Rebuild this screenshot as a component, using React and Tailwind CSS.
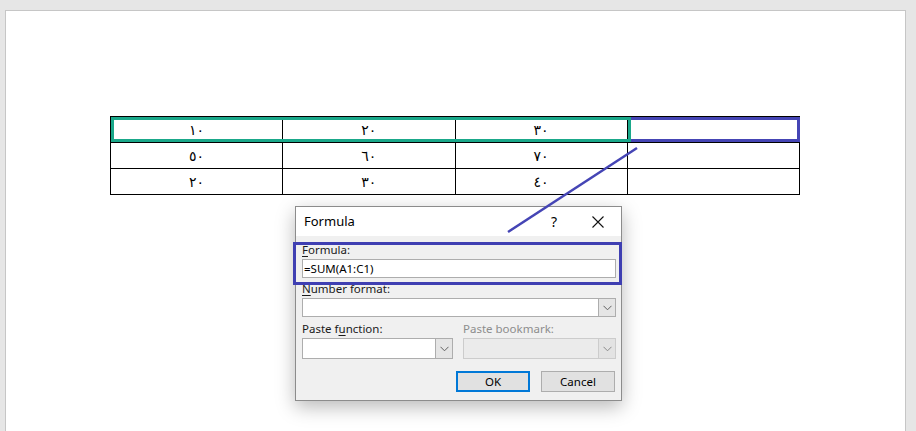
const ui = { fontFamily: '"Noto Sans", "Open Sans", sans-serif' };
const arabic = { fontFamily: '"DejaVu Sans", sans-serif' };

const rows = [
  ['١٠', '٢٠', '٣٠', ''],
  ['٥٠', '٦٠', '٧٠', ''],
  ['٢٠', '٣٠', '٤٠', ''],
];

function Chevron({ muted }) {
  return (
    <svg width="9" height="6" viewBox="0 0 9 6" fill="none">
      <path d="M0.5 0.8 L4.5 4.8 L8.5 0.8" stroke={muted ? '#8a8a8a' : '#606060'} strokeWidth="1" />
    </svg>
  );
}

function Select({ width, disabled }) {
  return (
    <div
      className={`flex h-full border ${disabled ? 'border-[#cccccc] bg-[#ebebeb]' : 'border-[#adadad] bg-white'}`}
      style={width ? { width } : undefined}
    >
      <div className="flex-1" />
      <div
        className={`w-[17px] flex items-center justify-center border-l ${disabled ? 'border-[#cccccc] bg-[#e3e3e3]' : 'border-[#adadad] bg-[#e5e5e5]'}`}
      >
        <Chevron muted={disabled} />
      </div>
    </div>
  );
}

function FormulaDialog() {
  return (
    <div
      className="w-[327px] h-[195px] border border-[#8c8c8c] bg-[#f0f0f0] shadow-[0_6px_18px_rgba(0,0,0,0.28)] text-[11.5px] text-[#1a1a1a]"
      style={ui}
    >
      {/* Title bar */}
      <div className="h-[29px] bg-white flex items-center pl-[8px] pr-[17px]">
        <span className="text-[13px] text-black">Formula</span>
        <span className="ml-auto mr-[35px] text-[14px] text-black">?</span>
        <svg width="12" height="12" viewBox="0 0 12 12">
          <path d="M0.5 0.5 L11.5 11.5 M11.5 0.5 L0.5 11.5" stroke="#111" strokeWidth="1.1" />
        </svg>
      </div>

      {/* Body */}
      <div className="pl-[6px] pr-[5px] pt-[5px]">
        <div className="h-[18px] leading-[18px]">
          <span className="underline underline-offset-2">F</span>ormula:
        </div>
        <div className="h-[19px] bg-white border border-[#adadad] flex items-center pl-[1px] text-black">
          =SUM(A1:C1)
        </div>

        <div className="mt-[2px] h-[18px] leading-[18px]">
          <span className="underline underline-offset-2">N</span>umber format:
        </div>
        <div className="h-[19px]">
          <Select />
        </div>

        <div className="mt-[3px] flex h-[18px] leading-[18px]">
          <div className="w-[161px]">
            Paste f<span className="underline underline-offset-2">u</span>nction:
          </div>
          <div className="text-[#8d8d8d]">Paste bookmark:</div>
        </div>
        <div className="flex h-[21px]">
          <Select width={151} />
          <div className="ml-[10px] flex-1">
            <Select disabled />
          </div>
        </div>

        <div className="mt-[12px] flex justify-end gap-[11px] pr-[1px]">
          <button className="w-[74px] h-[21px] bg-[#e1e1e1] border-2 border-[#0078d7] text-black leading-none">
            OK
          </button>
          <button className="w-[74px] h-[21px] bg-[#e1e1e1] border border-[#adadad] text-black leading-none">
            Cancel
          </button>
        </div>
      </div>
    </div>
  );
}

export default function App() {
  return (
    <div className="h-[431px] w-[916px] overflow-hidden bg-[#e6e6e6] pt-[10px] pl-[5px] pr-[10px]">
      <div className="relative h-[440px] bg-white border-t border-x border-[#c6c6c6]">
        {/* Table */}
        <div className="ml-[104px] mt-[105px] w-[690px]" style={arabic}>
          <table className="w-full border-collapse table-fixed">
            <tbody>
              {rows.map((row, i) => (
                <tr key={i} className="h-[26px]">
                  {row.map((cell, j) => (
                    <td key={j} className="border border-black text-center text-[14px] leading-none text-black p-0">
                      {cell}
                    </td>
                  ))}
                </tr>
              ))}
            </tbody>
          </table>
        </div>

        {/* Dialog */}
        <div className="ml-[289px] mt-[11px]">
          <FormulaDialog />
        </div>

        {/* Highlight overlays */}
        <div className="absolute left-[622px] top-[106px] w-[172px] h-[25px] border-[3px] border-[#4545b5]" />
        <div className="absolute left-[105px] top-[106px] w-[520px] h-[25px] border-[3px] border-[#1aa88a]" />
        <div className="absolute left-[287px] top-[231px] w-[329px] h-[43px] border-[3px] border-[#3f3fb2]" />
        <svg className="absolute left-0 top-0" width="900" height="420">
          <line x1="631" y1="137" x2="502" y2="221" stroke="#4545b5" strokeWidth="2.5" />
        </svg>
      </div>
    </div>
  );
}
